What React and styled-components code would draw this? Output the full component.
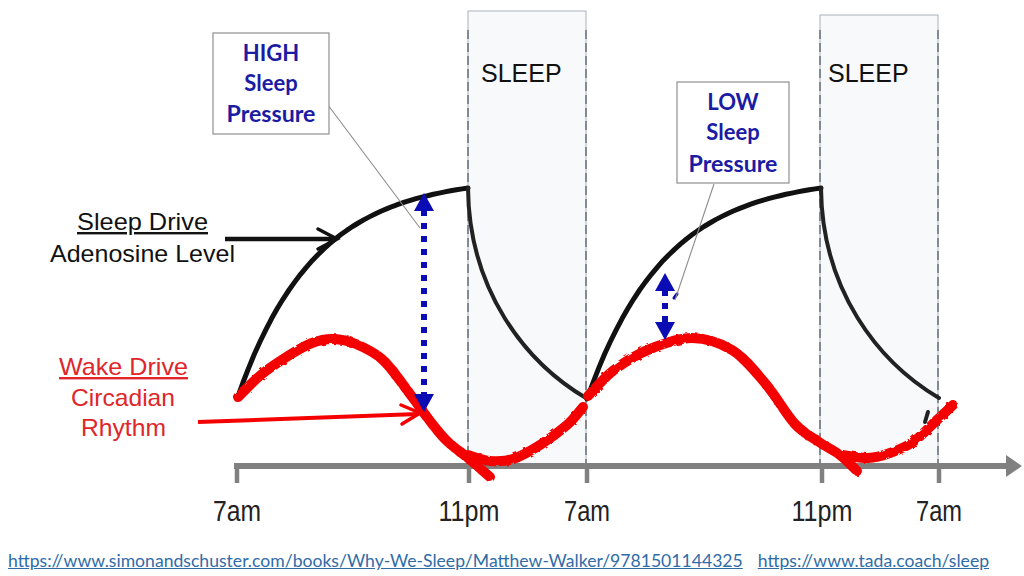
import React from "react";
import styled, { createGlobalStyle } from "styled-components";

const GlobalStyle = createGlobalStyle`
  html, body {
    margin: 0;
    padding: 0;
    background: #ffffff;
  }
  body {
    font-family: "Liberation Sans", Arial, sans-serif;
  }
`;

// smooth line through points (catmull-rom -> cubic bezier)
const smooth = (pts) => {
  let d = `M${pts[0][0]},${pts[0][1]}`;
  for (let i = 0; i < pts.length - 1; i++) {
    const p0 = pts[i - 1] || pts[i];
    const p1 = pts[i];
    const p2 = pts[i + 1];
    const p3 = pts[i + 2] || p2;
    const c1x = p1[0] + (p2[0] - p0[0]) / 6;
    const c1y = p1[1] + (p2[1] - p0[1]) / 6;
    const c2x = p2[0] - (p3[0] - p1[0]) / 6;
    const c2y = p2[1] - (p3[1] - p1[1]) / 6;
    d += ` C${c1x.toFixed(1)},${c1y.toFixed(1)} ${c2x.toFixed(1)},${c2y.toFixed(1)} ${p2[0]},${p2[1]}`;
  }
  return d;
};

// adenosine build-up while awake
const riseCurve = (x0, x1, yLow = 399, amount = 222, k = 3) => {
  const pts = [];
  for (let i = 0; i <= 40; i++) {
    const t = i / 40;
    const x = x0 + (x1 - x0) * t;
    const y = yLow - amount * (1 - Math.exp(-k * t));
    pts.push(`${x.toFixed(1)},${y.toFixed(1)}`);
  }
  return "M" + pts.join(" L");
};

const decayCurve = (x0, x1) =>
  `M${x0},188 C${x0 + 1},290 ${x0 + 57},362 ${x1},398`;

const wakeSegments = [
  [
    [238, 397], [262, 374], [288, 356], [312, 343], [333, 339], [356, 344],
    [383, 360], [410, 394], [430, 421], [447, 441], [468, 458], [490, 477],
  ],
  [[468, 455], [490, 461], [513, 459], [540, 445], [567, 425], [583, 407]],
  [
    [588, 396], [614, 370], [650, 349], [692, 338], [732, 350], [765, 383],
    [795, 424], [819, 442], [840, 455], [857, 471],
  ],
  [[842, 455], [868, 458], [890, 453], [913, 442], [937, 420], [953, 405]],
];

const sleepBands = [
  { x: 468, w: 118, top: 11 },
  { x: 820, w: 118, top: 15 },
];

const ticks = [
  { x: 237, label: "7am", w: 48 },
  { x: 469, label: "11pm", w: 61 },
  { x: 587, label: "7am", w: 46 },
  { x: 822, label: "11pm", w: 61 },
  { x: 939, label: "7am", w: 46 },
];

const Page = styled.div`
  width: 1024px;
  height: 576px;
  overflow: hidden;
  display: flex;
  flex-direction: column;
`;

const Chart = styled.svg`
  display: block;
  width: 1024px;
  height: 550px;
  flex: none;
`;

const Band = styled.rect`
  fill: #f8f9fa;
  stroke: #a9b1b9;
  stroke-width: 1;
`;

const Guide = styled.line`
  stroke: #6e7882;
  stroke-width: 1.6;
  stroke-dasharray: 9 4;
`;

const Axis = styled.line`
  stroke: #808080;
  stroke-width: ${(p) => p.$w || 6};
`;

const Curve = styled.path`
  fill: none;
  stroke: ${(p) => p.$color};
  stroke-width: ${(p) => p.$w};
  stroke-linecap: round;
  stroke-linejoin: round;
`;

const Pointer = styled.polyline`
  fill: none;
  stroke: ${(p) => p.$color};
  stroke-width: ${(p) => p.$w};
  stroke-linecap: round;
  stroke-linejoin: miter;
`;

const Leader = styled.line`
  stroke: #8c8c8c;
  stroke-width: 1.1;
`;

const Dots = styled.line`
  stroke: #0c0cb4;
  stroke-width: 6;
  stroke-dasharray: 6 7;
`;

const Head = styled.polygon`
  fill: #0c0cb4;
`;

const Callout = styled.rect`
  fill: #ffffff;
  stroke: #8f8f8f;
  stroke-width: 1.2;
`;

const Label = styled.text`
  font-family: ${(p) =>
    p.$bold ? "Lato, 'Open Sans', sans-serif" : "'Liberation Sans', Arial, sans-serif"};
  font-weight: ${(p) => (p.$bold ? 700 : 400)};
  font-size: ${(p) => p.$size || 24}px;
  fill: ${(p) => p.$color || "#111111"};
  text-decoration: ${(p) => (p.$under ? "underline" : "none")};
`;

const Sources = styled.div`
  display: flex;
  gap: 15px;
  padding: 0 0 0 8px;
  font-family: Lato, "Open Sans", sans-serif;
  font-size: 17.6px;
  line-height: 22px;
`;

const Source = styled.a`
  color: #2f6ca8;
  text-decoration: underline;
  white-space: nowrap;
`;

const PressureArrow = ({ x, top, bottom }) => (
  <g>
    <Dots x1={x} y1={top + 17} x2={x} y2={bottom - 17} />
    <Head points={`${x},${top} ${x - 10},${top + 18} ${x + 10},${top + 18}`} />
    <Head points={`${x},${bottom} ${x - 10},${bottom - 18} ${x + 10},${bottom - 18}`} />
  </g>
);

const PressureBox = ({ x, y, w, h, cx, level, lines }) => (
  <g>
    <Callout x={x} y={y} width={w} height={h} />
    <Label $bold $size={22} $color="#1b1ba3" x={cx} y={lines[0]} textAnchor="middle">
      {level}
    </Label>
    <Label $bold $size={22} $color="#1b1ba3" x={cx} y={lines[1]} textAnchor="middle">
      Sleep
    </Label>
    <Label
      $bold
      $size={22}
      $color="#1b1ba3"
      x={cx}
      y={lines[2]}
      textAnchor="middle"
      textLength={89}
      lengthAdjust="spacingAndGlyphs"
    >
      Pressure
    </Label>
  </g>
);

export default function App() {
  return (
    <Page>
      <GlobalStyle />
      <Chart viewBox="0 0 1024 550">
        <defs>
          <filter id="marker" x="-5%" y="-20%" width="110%" height="140%">
            <feTurbulence type="fractalNoise" baseFrequency="0.18" numOctaves="2" seed="3" />
            <feDisplacementMap in="SourceGraphic" scale="3" />
          </filter>
        </defs>

        {sleepBands.map((b) => (
          <Band key={b.x} x={b.x} y={b.top} width={b.w} height={466 - b.top} />
        ))}
        {sleepBands.map((b) => (
          <g key={"g" + b.x}>
            <Guide x1={b.x} y1={30} x2={b.x} y2={466} />
            <Guide x1={b.x + b.w} y1={30} x2={b.x + b.w} y2={466} />
          </g>
        ))}

        <Label x={481} y={82} $size={25}>SLEEP</Label>
        <Label x={828} y={82} $size={25}>SLEEP</Label>

        {/* time axis */}
        <Axis x1={234} y1={466} x2={1008} y2={466} $w={6} />
        <polygon points="1022,466 1006,455 1006,477" fill="#808080" />
        {ticks.map((t) => (
          <Axis key={"t" + t.x} x1={t.x} y1={463} x2={t.x} y2={483} $w={4.5} />
        ))}
        {ticks.map((t) => (
          <Label
            key={"l" + t.x}
            x={t.x}
            y={521}
            $size={29}
            $color="#222222"
            textAnchor="middle"
            textLength={t.w}
            lengthAdjust="spacingAndGlyphs"
          >
            {t.label}
          </Label>
        ))}

        {/* sleep drive */}
        <Curve d={riseCurve(237, 468)} $color="#111111" $w={5} />
        <Curve d={decayCurve(468, 586)} $color="#222222" $w={4} />
        <Curve d={riseCurve(587, 821)} $color="#111111" $w={5} />
        <Curve d={decayCurve(821, 939)} $color="#222222" $w={4} />
        <Curve d="M928,412 L925,422" $color="#222222" $w={4} />

        {/* wake drive */}
        <g filter="url(#marker)">
          {wakeSegments.map((s, i) => (
            <Curve key={i} d={smooth(s)} $color="#f40000" $w={10} />
          ))}
        </g>

        {/* pressure markers */}
        <PressureArrow x={424} top={193} bottom={412} />
        <PressureArrow x={665} top={273} bottom={340} />
        <Curve d="M677,294 L674,298" $color="#0c0cb4" $w={3} />

        <Leader x1={313} y1={85} x2={420} y2={228} />
        <Leader x1={714} y1={184} x2={675} y2={300} />
        <PressureBox x={213} y={33} w={116} h={101} cx={271} level="HIGH" lines={[61, 91, 122]} />
        <PressureBox x={677} y={82} w={112} h={101} cx={733} level="LOW" lines={[110, 140, 172]} />

        {/* left labels */}
        <Label x={77} y={230} $under textLength={131} lengthAdjust="spacingAndGlyphs">
          Sleep Drive
        </Label>
        <Label x={50} y={262} textLength={185} lengthAdjust="spacingAndGlyphs">
          Adenosine Level
        </Label>
        <line x1={225} y1={239} x2={334} y2={239} stroke="#111" strokeWidth={4.5} />
        <Pointer points="318,229 337,239 318,249" $color="#111111" $w={3.5} />

        <Label x={59} y={375} $under $color="#e0262b" textLength={129} lengthAdjust="spacingAndGlyphs">
          Wake Drive
        </Label>
        <Label x={71} y={406} $color="#e0262b" textLength={104} lengthAdjust="spacingAndGlyphs">
          Circadian
        </Label>
        <Label x={81} y={436} $color="#e0262b" textLength={85} lengthAdjust="spacingAndGlyphs">
          Rhythm
        </Label>
        <line x1={198} y1={422} x2={418} y2={414} stroke="#f40000" strokeWidth={4} />
        <Pointer points="401,405 420,413 402,424" $color="#f40000" $w={3.5} />
      </Chart>

      <Sources>
        <Source href="https://www.simonandschuster.com/books/Why-We-Sleep/Matthew-Walker/9781501144325">
          https://www.simonandschuster.com/books/Why-We-Sleep/Matthew-Walker/9781501144325
        </Source>
        <Source href="https://www.tada.coach/sleep">https://www.tada.coach/sleep</Source>
      </Sources>
    </Page>
  );
}
